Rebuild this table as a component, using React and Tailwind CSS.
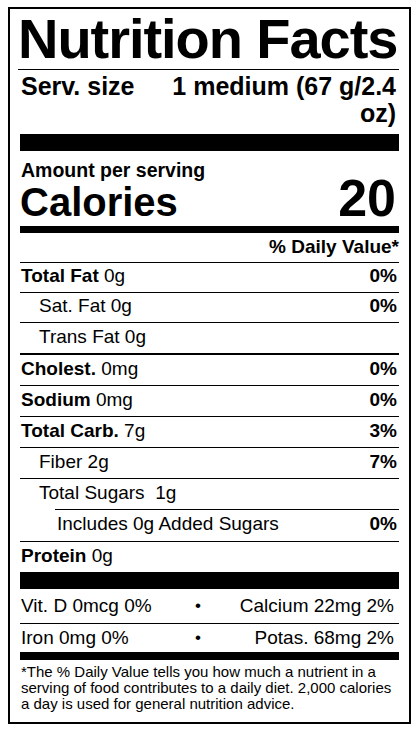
import React from 'react';

const rows = [
  { name: 'Total Fat', amt: ' 0g', dv: '0%', bold: true, h: 'h-[30px]' },
  { name: 'Sat. Fat 0g', dv: '0%', level: 1, h: 'h-[30px]' },
  { name: 'Trans Fat 0g', level: 1, h: 'h-[31px]' },
  { name: 'Cholest.', amt: ' 0mg', dv: '0%', bold: true, h: 'h-[32px]', thick: true },
  { name: 'Sodium', amt: ' 0mg', dv: '0%', bold: true, h: 'h-[31px]' },
  { name: 'Total Carb.', amt: ' 7g', dv: '3%', bold: true, h: 'h-[31px]' },
  { name: 'Fiber 2g', dv: '7%', level: 1, h: 'h-[31px]' },
  { name: 'Total Sugars\u00a0\u00a01g', level: 1, h: 'h-[31px]' },
  { name: 'Includes 0g Added Sugars', dv: '0%', level: 2, h: 'h-[32px]' },
  { name: 'Protein', amt: ' 0g', bold: true, h: 'h-[31px]' },
];

const NutrientRow = ({ row }) => {
  const indent =
    row.level === 1 ? 'pl-[19px]' : row.level === 2 ? 'ml-[35px] pl-[2px]' : 'pl-[1px]';
  return (
    <div
      className={`flex items-center justify-between pb-[3px] pr-[2px] text-[19px] leading-[22px] border-black ${
        row.thick ? 'border-t-2' : 'border-t'
      } ${row.h} ${indent}`}
    >
      <span>
        {row.bold ? <span className="font-bold">{row.name}</span> : row.name}
        {row.amt}
      </span>
      {row.dv && <span className="font-bold">{row.dv}</span>}
    </div>
  );
};

const VitRow = ({ left, right, className }) => (
  <div className={`grid grid-cols-[155px_44px_1fr] text-[19px] leading-[22px] pl-[1px] pr-[5px] ${className}`}>
    <span>{left}</span>
    <span className="text-center text-[17px]">•</span>
    <span className="text-right">{right}</span>
  </div>
);

export default function App() {
  return (
    <div className="min-h-[734px] bg-white pt-[7px] pl-[8px] text-black font-['Liberation_Sans',Arial,sans-serif]">
      <div className="w-[403px] border-2 border-black px-[10px]">
        <h1 className="border-b border-black text-[56px] font-bold leading-[60px] tracking-[-1.05px] -ml-[2px] whitespace-nowrap">
          Nutrition Facts
        </h1>

        <div className="flex items-start justify-between pt-[3px] pb-[7px] text-[25px] font-bold leading-[27px]">
          <span className="pl-[1px]">Serv. size</span>
          <span className="w-[228px] text-right pr-[3px]">1 medium (67 g/2.4 oz)</span>
        </div>

        <div className="h-[17px] bg-black" />

        <div className="pt-[9px]">
          <div className="text-[19.5px] font-bold leading-[20px] pl-[1px]">Amount per serving</div>
          <div className="flex h-[46px] items-baseline justify-between font-bold">
            <span className="text-[40px] leading-[40px]">Calories</span>
            <span className="text-[52px] leading-[36px] pr-[3px]">20</span>
          </div>
        </div>

        <div className="h-[7px] bg-black" />

        <div className="pt-[1px] pb-[3px] text-right text-[19px] font-bold leading-[25px]">% Daily Value*</div>

        {rows.map((row) => (
          <NutrientRow key={row.name} row={row} />
        ))}

        <div className="h-[17px] bg-black" />

        <VitRow className="h-[34px] pt-[6px]" left="Vit. D 0mcg 0%" right="Calcium 22mg 2%" />
        <VitRow className="h-[29px] pt-[3px] border-t border-black" left="Iron 0mg 0%" right="Potas. 68mg 2%" />

        <div className="h-[8px] bg-black" />

        <p className="pt-[4px] pb-[10px] text-[15px] leading-[16px] pl-[1px] whitespace-nowrap">
          *The % Daily Value tells you how much a nutrient in a
          <br />
          serving of food contributes to a daily diet. 2,000 calories
          <br />
          a day is used for general nutrition advice.
        </p>
      </div>
    </div>
  );
}
